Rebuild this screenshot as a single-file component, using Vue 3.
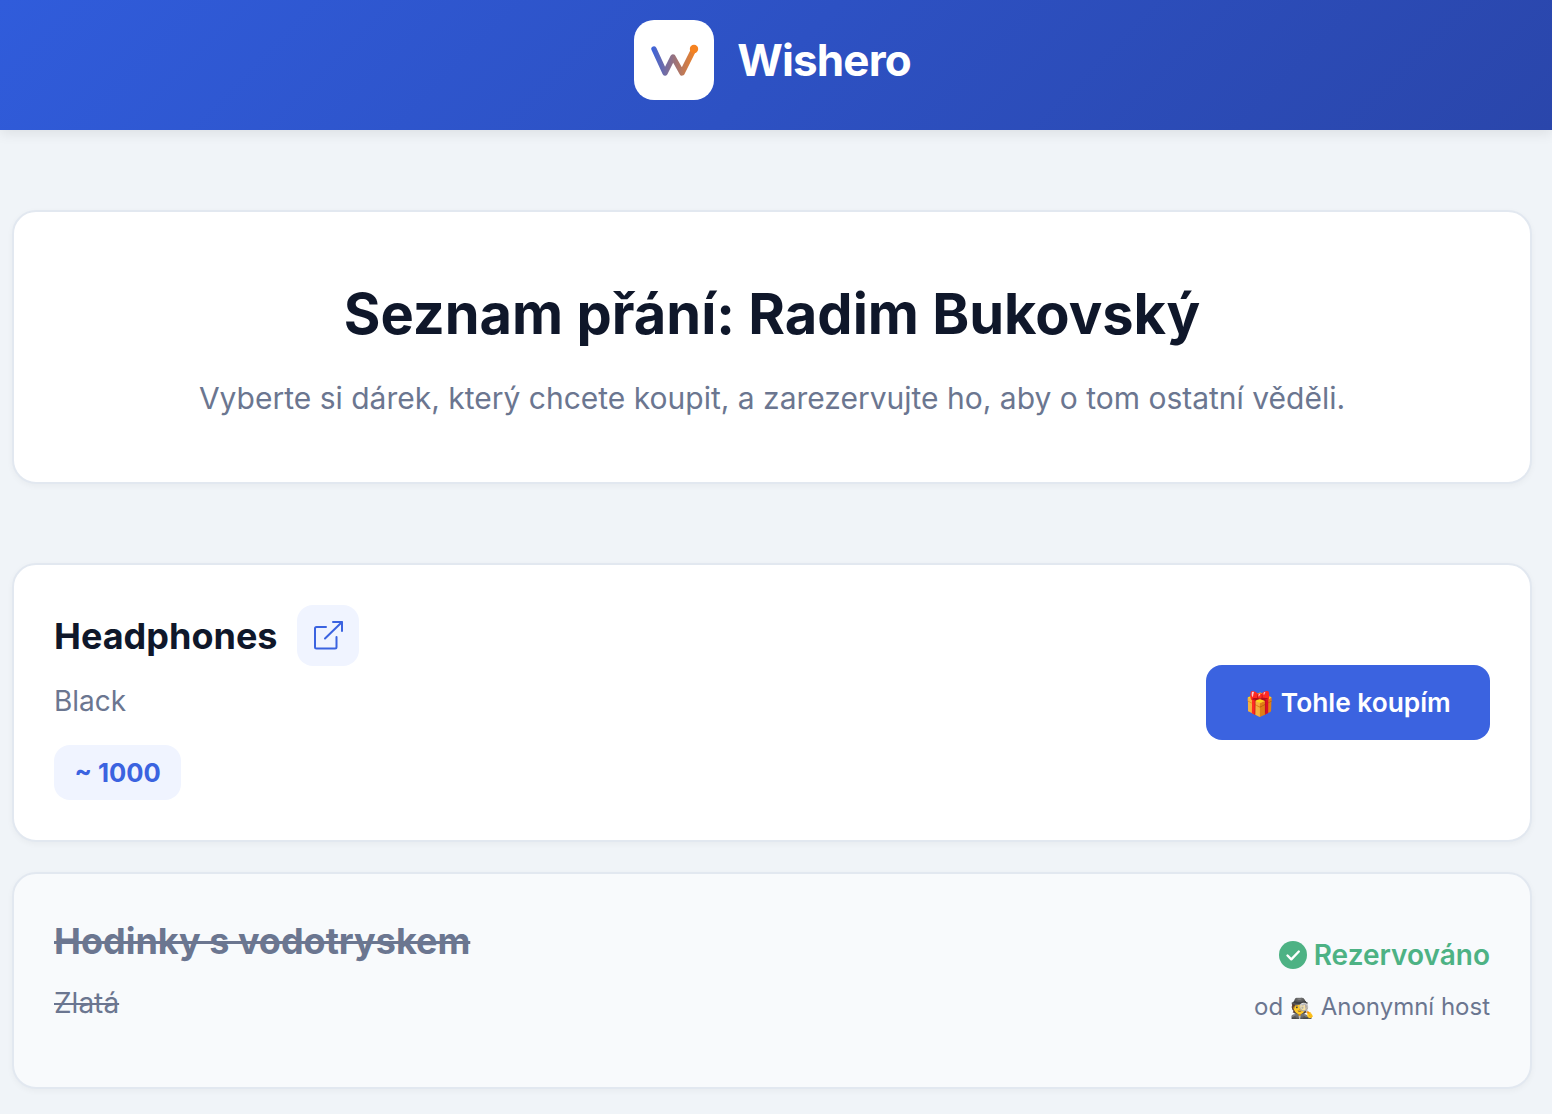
<script setup>
const items = [
  { id: 1, name: "Headphones", note: "Black", price: "~ 1000", reserved: false },
  { id: 2, name: "Hodinky s vodotryskem", note: "Zlatá", reserved: true, by: "Anonymní host" },
];
</script>

<template>
  <header class="top">
    <div class="logo">
      <svg width="52" height="52" viewBox="0 0 52 52" fill="none">
        <defs>
          <linearGradient id="wg" x1="4" y1="0" x2="48" y2="0" gradientUnits="userSpaceOnUse">
            <stop offset="0" stop-color="#3b63dc" />
            <stop offset="1" stop-color="#f58220" />
          </linearGradient>
        </defs>
        <path d="M6 15 L17 39 L25 23 L34 39 L46 15" stroke="url(#wg)" stroke-width="5.4" stroke-linecap="round" stroke-linejoin="round" />
        <circle cx="46" cy="15" r="4.200" fill="#f58220" />
      </svg>
    </div>
    <span class="brand">Wishero</span>
  </header>

  <main class="page">
    <section class="card intro">
      <h1>Seznam přání: Radim Bukovský</h1>
      <p>Vyberte si dárek, který chcete koupit, a zarezervujte ho, aby o tom ostatní věděli.</p>
    </section>

    <div class="list">
      <article v-for="item in items" :key="item.id" class="card item" :class="{ reserved: item.reserved }">
        <div class="info">
          <div class="name-row">
            <h2>{{ item.name }}</h2>
            <a v-if="!item.reserved" class="link">
              <svg width="32" height="32" viewBox="0 0 32 32" fill="none" stroke="#3b63e0" stroke-width="2" stroke-linecap="round" stroke-linejoin="round">
                <path d="M14 7H4.500A1.500 1.500 0 0 0 3 8.500V27a1.500 1.500 0 0 0 1.500 1.500H23a1.500 1.500 0 0 0 1.500-1.500V17" />
                <path d="M13 18.500L30 2M21 2h9v9" />
              </svg>
            </a>
          </div>
          <p class="note">{{ item.note }}</p>
          <span v-if="item.price" class="price">{{ item.price }}</span>
        </div>

        <button v-if="!item.reserved" class="buy"><span class="buy-emoji">🎁</span> Tohle koupím</button>
        <div v-else class="status">
          <div class="status-top">
            <svg width="28" height="28" viewBox="0 0 28 28">
              <circle cx="14" cy="14" r="14" fill="#4db284" />
              <path d="M8.500 14.500l3.800 3.800 7.500-7.800" fill="none" stroke="#fff" stroke-width="2.400" stroke-linecap="round" stroke-linejoin="round" />
            </svg>
            <span>Rezervováno</span>
          </div>
          <div class="by">od <span class="by-emoji">🕵️</span> {{ item.by }}</div>
        </div>
      </article>
    </div>
  </main>
</template>

<style>
body {
  background: #f0f4f8;
}
</style>

<style scoped>
.top {
  box-sizing: border-box;
  height: 130px;
  padding: 0 7px 10px 0;
  display: flex;
  align-items: center;
  justify-content: center;
  gap: 23px;
  background: linear-gradient(135deg, #305cdb, #2a46ab);
  box-shadow: 0 4px 12px rgba(0, 0, 0, 0.08);
  font-family: Inter, "Noto Sans", sans-serif;
}
.logo {
  width: 80px;
  height: 80px;
  border-radius: 20px;
  background: #fff;
  display: flex;
  align-items: center;
  justify-content: center;
}
.brand {
  color: #fff;
  font-size: 44px;
  font-weight: 700;
  letter-spacing: -0.88px;
}
.page {
  padding: 80px 20px 26px 12px;
  font-family: Inter, "Noto Sans", sans-serif;
}
.card {
  background: #fff;
  border: 2px solid #e2e8f0;
  border-radius: 24px;
  box-shadow: 0 2px 6px rgba(0, 0, 0, 0.04);
}
.intro {
  height: 274px;
  box-sizing: border-box;
  padding-top: 68px;
  text-align: center;
}
h1 {
  margin: 0;
  font-size: 56px;
  line-height: 68px;
  font-weight: 700;
  color: #0f172a;
}
.intro p {
  margin: 30px 0 0;
  font-size: 30px;
  line-height: 40px;
  color: #6b7690;
}
.list {
  margin-top: 79px;
  display: flex;
  flex-direction: column;
  gap: 30px;
}
.item {
  box-sizing: border-box;
  display: flex;
  align-items: center;
  justify-content: space-between;
  padding: 40px;
}
.info {
  display: flex;
  flex-direction: column;
  align-items: flex-start;
}
.name-row {
  display: flex;
  align-items: center;
  gap: 19px;
}
h2 {
  margin: 0;
  font-size: 36px;
  line-height: 60px;
  font-weight: 700;
  color: #0f172a;
}
.link {
  width: 62px;
  height: 61px;
  border-radius: 16px;
  background: #f0f4ff;
  display: flex;
  align-items: center;
  justify-content: center;
}
.note {
  margin: 17px 0 0;
  font-size: 28px;
  line-height: 36px;
  color: #6b7690;
}
.price {
  margin-top: 26px;
  padding: 0 20.500px;
  height: 55px;
  line-height: 55px;
  border-radius: 16px;
  background: #f0f4ff;
  color: #3b63e0;
  font-size: 25.600px;
  font-weight: 700;
}
.buy {
  width: 284px;
  height: 75px;
  border: 0;
  border-radius: 16px;
  background: #3b63e0;
  color: #fff;
  font-family: inherit;
  font-size: 26.300px;
  font-weight: 600;
}
.buy-emoji {
  font-size: 23.500px;
}
.reserved {
  background: #f8fafc;
  height: 217px;
  padding: 37px 40px 39px;
}
.reserved .info {
  align-self: flex-start;
}
.reserved h2,
.reserved .note {
  color: #6b7690;
  text-decoration: line-through;
}
.reserved .note {
  margin-top: 14px;
}
.status {
  display: flex;
  flex-direction: column;
  align-items: flex-end;
  gap: 20px;
}
.status-top {
  display: flex;
  align-items: center;
  gap: 7px;
  color: #4db284;
  font-size: 28px;
  font-weight: 600;
}
.by {
  font-size: 24px;
  color: #6b7690;
}
.by-emoji {
  font-size: 19.500px;
}
</style>
